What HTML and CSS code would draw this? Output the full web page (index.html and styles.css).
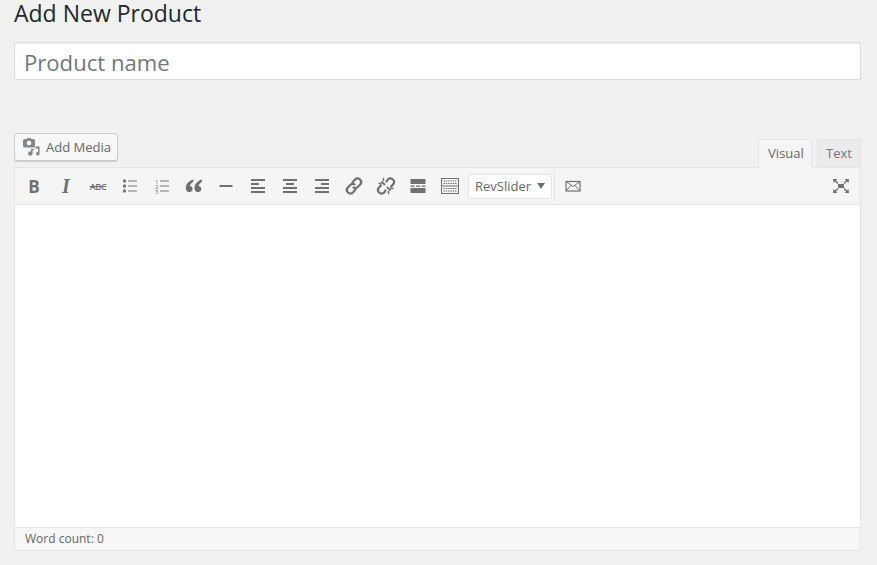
FILE: index.html
```html
<!DOCTYPE html>
<html lang="en">
<head>
<meta charset="utf-8">
<title>Add New Product</title>
<link rel="stylesheet" href="styles.css">
</head>
<body>
<h1 class="title">Add New Product</h1>
<input class="name" type="text" placeholder="Product name">
<div class="editor-head">
  <button class="media" type="button">
    <svg class="media-icon" width="18" height="18" viewBox="0 0 18 18"><path d="M2.500 1h2l1-1h3l1 1h2A1.500 1.500 0 0 1 13 2.500V8a1.500 1.500 0 0 1-1.500 1.500h-9A1.500 1.500 0 0 1 1 8V2.500A1.500 1.500 0 0 1 2.500 1z" fill="#82878c"/><circle cx="7" cy="5" r="2.300" fill="#f7f7f7"/><path d="M13.500 8.500h4v7.200a1.800 1.800 0 1 1-1.500-1.700v-3.500h-2.500z" fill="#82878c"/><circle cx="8.300" cy="15.500" r="2.300" fill="#82878c"/><path d="M9 15v-4h3v1.300h-1.500V15z" fill="#82878c"/></svg>
    <span class="media-label">Add Media</span>
  </button>
  <div class="tabs">
    <span class="tab tab-active">Visual</span>
    <span class="tab">Text</span>
  </div>
</div>
<div class="editor">
  <div class="toolbar">
    <span class="tool glyph-b">B</span>
    <span class="tool glyph-i">I</span>
    <span class="tool glyph-s">ABC</span>
    <span class="tool"><svg width="20" height="20" viewBox="0 0 20 20"><g fill="#777"><circle cx="4.500" cy="5" r="1.700"/><circle cx="4.500" cy="10" r="1.700"/><circle cx="4.500" cy="15" r="1.700"/><rect x="8" y="4.500" width="9" height="1"/><rect x="8" y="9.500" width="9" height="1"/><rect x="8" y="14.500" width="9" height="1"/></g></svg></span>
    <span class="tool"><svg width="20" height="20" viewBox="0 0 20 20"><g fill="#777"><rect x="8" y="4.500" width="9" height="1"/><rect x="8" y="9.500" width="9" height="1"/><rect x="8" y="14.500" width="9" height="1"/><text class="num" x="3" y="7.500">1</text><text class="num" x="3" y="12.500">2</text><text class="num" x="3" y="17.500">3</text></g></svg></span>
    <span class="tool"><svg width="20" height="20" viewBox="0 0 20 20"><path fill="#707070" d="M9.300 3.500C5 4.800 1.800 7.800 1.800 12c0 2.500 1.400 4.200 3.500 4.200 1.900 0 3.300-1.400 3.300-3.100 0-1.700-1.100-2.900-2.700-3 .2-1.700 1.400-3.200 3.400-4.400zM18 3.500c-4.300 1.300-7.500 4.300-7.500 8.500 0 2.500 1.400 4.200 3.500 4.200 1.900 0 3.300-1.400 3.300-3.100 0-1.700-1.100-2.900-2.700-3 .2-1.700 1.400-3.200 3.400-4.400z"/></svg></span>
    <span class="tool"><svg width="20" height="20" viewBox="0 0 20 20"><rect x="3.500" y="9" width="13" height="2" fill="#707070"/></svg></span>
    <span class="tool"><svg width="20" height="20" viewBox="0 0 20 20"><g fill="#707070"><rect x="3" y="3" width="14" height="2"/><rect x="3" y="7" width="8" height="2"/><rect x="3" y="11" width="14" height="2"/><rect x="3" y="15" width="14" height="2"/></g></svg></span>
    <span class="tool"><svg width="20" height="20" viewBox="0 0 20 20"><g fill="#707070"><rect x="3" y="3" width="14" height="2"/><rect x="6" y="7" width="8" height="2"/><rect x="3" y="11" width="14" height="2"/><rect x="3" y="15" width="14" height="2"/></g></svg></span>
    <span class="tool"><svg width="20" height="20" viewBox="0 0 20 20"><g fill="#707070"><rect x="3" y="3" width="14" height="2"/><rect x="9" y="7" width="8" height="2"/><rect x="3" y="11" width="14" height="2"/><rect x="3" y="15" width="14" height="2"/></g></svg></span>
    <span class="tool"><svg width="20" height="20" viewBox="0 0 20 20"><g fill="none" stroke="#707070" stroke-width="2.200" stroke-linecap="round"><path d="M8.500 6.500l2.500-3a3.500 3.500 0 0 1 5 0 3.500 3.500 0 0 1 .4 4.800L13.700 11a3.500 3.500 0 0 1-4.200.6"/><path d="M11.500 13.500l-2.500 3a3.500 3.500 0 0 1-5 0 3.500 3.500 0 0 1-.4-4.800L6.300 9a3.500 3.500 0 0 1 4.200-.6"/></g></svg></span>
    <span class="tool"><svg width="20" height="20" viewBox="0 0 20 20"><g fill="none" stroke="#707070" stroke-width="2.200" stroke-linecap="round"><path d="M10.500 5.500l1.300-2a3.500 3.500 0 0 1 5 0 3.500 3.500 0 0 1 .4 4.800l-2.200 2.400"/><path d="M9.500 14.500l-1.300 2a3.500 3.500 0 0 1-5 0 3.500 3.500 0 0 1-.4-4.800L5 9.300"/><path d="M6 6l2.500 2.500M11.500 11.500L14 14" stroke-width="1.800"/><path d="M3 7.500h2M7.500 2.500v2M17 12.500h-2M12.500 17.500v-2" stroke-width="1.500"/></g></svg></span>
    <span class="tool"><svg width="20" height="20" viewBox="0 0 20 20"><g fill="#707070"><rect x="2.500" y="3" width="15" height="5"/><rect x="2.500" y="9.500" width="4" height="1.300"/><rect x="8" y="9.500" width="4" height="1.300"/><rect x="13.500" y="9.500" width="4" height="1.300"/><rect x="2.500" y="12" width="15" height="5"/></g></svg></span>
    <span class="tool"><svg width="20" height="20" viewBox="0 0 20 20"><rect x="1.500" y="2.500" width="17" height="15" fill="none" stroke="#707070"/><rect x="1.500" y="9.500" width="17" height="1" fill="#707070"/><path d="M3.500 5h13M3.500 7.500h13M3.500 12.500h13M3.500 15h13" stroke="#707070" stroke-dasharray="1.500 .8"/></svg></span>
    <button class="select" type="button"><span>RevSlider</span><i class="caret"></i></button>
    <span class="sep"></span>
    <span class="tool"><svg width="20" height="20" viewBox="0 0 20 20"><rect x="3" y="5.500" width="14" height="9.500" fill="none" stroke="#707070" stroke-width="1.200"/><path d="M3.500 6l6.500 4.500L16.500 6M3.500 14.500l4.500-5M16.500 14.500l-4.500-5" fill="none" stroke="#707070"/></svg></span>
    <span class="tool tool-end"><svg width="20" height="20" viewBox="0 0 20 20"><g fill="#707070"><rect x="7" y="8" width="6" height="4"/><path d="M2 3h4.500L5 4.500 7.500 7 6.500 8 4 5.500 2.500 7zM18 3h-4.500L15 4.500 12.500 7l1 1L16 5.500 17.500 7zM2 17h4.500L5 15.500 7.500 13l-1-1L4 14.500 2.500 13zM18 17h-4.500l1.500-1.500-2.500-2.500 1-1 2.500 2.500 1.500-1.500z"/></g></svg></span>
  </div>
  <div class="content"></div>
  <div class="status">Word count: 0</div>
</div>
</body>
</html>
```
FILE: styles.css
```css
* { box-sizing: border-box; }
html, body { margin: 0; }
body {
  background: #f1f1f1;
  color: #444;
  font-family: "Open Sans", sans-serif;
  padding: 0 16px 0 14px;
}
.title {
  margin: 0;
  height: 42px;
  font-size: 23px;
  line-height: 27px;
  font-weight: 400;
  color: #23282d;
}
.name {
  display: block;
  width: 100%;
  height: 38px;
  padding: 5px 9px 3px;
  font-family: "Open Sans", sans-serif;
  font-size: 22.100px;
  line-height: 30px;
  color: #32373c;
  background: #fff;
  border: 1px solid #ddd;
  outline: 0;
  box-shadow: inset 0 1px 2px rgba(0,0,0,.07);
}
.name::placeholder { color: #72777c; opacity: 1; }
.editor-head {
  display: flex;
  justify-content: space-between;
  align-items: flex-end;
  margin-top: 53px;
  height: 34px;
}
.media {
  display: flex;
  align-items: center;
  align-self: flex-start;
  gap: 6px;
  width: 104px;
  height: 28px;
  padding: 0 6px 0 7px;
  font-family: "Open Sans", sans-serif;
  font-size: 13px;
  color: #666;
  background: #f7f7f7;
  border: 1px solid #ccc;
  border-radius: 3px;
  box-shadow: 0 1px 0 #ccc;
}
.media-icon { flex: none; }
.media-label { white-space: nowrap; }
.tabs { display: flex; align-items: flex-end; gap: 5px; }
.tab {
  display: block;
  height: 28px;
  padding: 0 8px;
  font-size: 13px;
  line-height: 27px;
  color: #777;
  background: #ebebeb;
  border: 1px solid #e5e5e5;
  border-bottom: 0;
}
.tab-active {
  width: 54px;
  height: 29px;
  padding: 0 9px;
  line-height: 27px;
  color: #666;
  background: #f5f5f5;
  border-bottom: 1px solid #f5f5f5;
  margin-bottom: -1px;
  position: relative;
}
.editor {
  height: 384px;
  display: flex;
  flex-direction: column;
  background: #fff;
  border: 1px solid #e5e5e5;
}
.toolbar {
  display: flex;
  align-items: center;
  flex: none;
  height: 37px;
  padding: 0 3px;
  background: #f5f5f5;
  border-bottom: 1px solid #e5e5e5;
}
.tool {
  display: flex;
  align-items: center;
  justify-content: center;
  flex: none;
  width: 32px;
  height: 30px;
  color: #707070;
}
.tool-end { margin-left: auto; }
.glyph-b { font-size: 17px; font-weight: 700; }
.glyph-i { font-family: "Liberation Serif", serif; font-size: 20px; font-weight: 700; font-style: italic; }
.glyph-s { font-size: 9px; font-weight: 600; text-decoration: line-through; letter-spacing: -.3px; }
.num { font-family: "Open Sans", sans-serif; font-size: 6px; }
.select {
  display: flex;
  align-items: center;
  justify-content: space-between;
  flex: none;
  width: 84px;
  height: 25px;
  margin-left: 2px;
  padding: 0 6px;
  font-family: "Open Sans", sans-serif;
  font-size: 13px;
  color: #666;
  background: #fff;
  border: 1px solid #e5e5e5;
}
.caret {
  width: 0;
  height: 0;
  border-left: 4px solid transparent;
  border-right: 4px solid transparent;
  border-top: 6px solid #707070;
}
.sep {
  flex: none;
  width: 1px;
  height: 30px;
  margin-left: 2px;
  margin-right: 2px;
  background: #e5e5e5;
}
.content { flex: 1; background: #fff; }
.status {
  flex: none;
  height: 23px;
  padding-left: 10px;
  font-size: 12px;
  line-height: 22px;
  color: #666;
  background: #f7f7f7;
  border-top: 1px solid #e5e5e5;
}
```
